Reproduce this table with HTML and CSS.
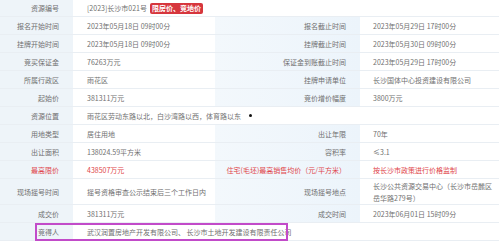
FILE: index.html
```html
<!DOCTYPE html>
<html lang="zh-CN">
<head>
<meta charset="utf-8">
<title>资源详情</title>
<link rel="stylesheet" href="styles.css">
</head>
<body>
<div class="sheet">
  <div class="lab">资源编号</div>
  <div class="val span3">[2023]长沙市021号<span class="badge">限房价、竞地价</span></div>

  <div class="lab">报名开始时间</div>
  <div class="val">2023年05月18日 09时00分</div>
  <div class="lab2">报名截止时间</div>
  <div class="val2">2023年05月29日 17时00分</div>

  <div class="lab">挂牌开始时间</div>
  <div class="val">2023年05月18日 09时00分</div>
  <div class="lab2">挂牌截止时间</div>
  <div class="val2">2023年05月30日 09时00分</div>

  <div class="lab">竞买保证金</div>
  <div class="val">76263万元</div>
  <div class="lab2">保证金到账截止时间</div>
  <div class="val2">2023年05月29日 17时00分</div>

  <div class="lab">所属行政区</div>
  <div class="val">雨花区</div>
  <div class="lab2">挂牌申请单位</div>
  <div class="val2">长沙国体中心投资建设有限公司</div>

  <div class="lab">起始价</div>
  <div class="val">381311万元</div>
  <div class="lab2">竞价增价幅度</div>
  <div class="val2">3800万元</div>

  <div class="lab">资源位置</div>
  <div class="val span3">雨花区劳动东路以北，白沙湾路以西，体育路以东<span class="dot"></span></div>

  <div class="lab">用地类型</div>
  <div class="val">居住用地</div>
  <div class="lab2">出让年限</div>
  <div class="val2">70年</div>

  <div class="lab">出让面积</div>
  <div class="val">138024.59平方米</div>
  <div class="lab2">容积率</div>
  <div class="val2">≤3.1</div>

  <div class="lab red">最高限价</div>
  <div class="val red">438507万元</div>
  <div class="lab2 red">住宅(毛坯)最高销售均价（元/平方米）</div>
  <div class="val2 red">按长沙市政策进行价格监制</div>

  <div class="lab">现场摇号时间</div>
  <div class="val">摇号资格审查公示结束后三个工作日内</div>
  <div class="lab2">现场摇号地点</div>
  <div class="val2 multi">长沙公共资源交易中心（长沙市岳麓区<br>岳华路279号）</div>

  <div class="lab">成交价</div>
  <div class="val">381311万元</div>
  <div class="lab2">成交时间</div>
  <div class="val2">2023年06月01日 15时09分</div>

  <div class="lab winner">竞得人<span class="mark"></span></div>
  <div class="val span3">武汉润置房地产开发有限公司、 长沙市土地开发建设有限责任公司</div>
</div>
</body>
</html>
```
FILE: styles.css
```css
html, body {
  margin: 0;
  padding: 0;
  background: #ffffff;
}
body {
  font-family: "Noto Sans CJK SC", "Noto Sans", "Liberation Sans", sans-serif;
  font-size: 7px;
  color: #707070;
  width: 499px;
  height: 244px;
  overflow: hidden;
}
.sheet {
  display: grid;
  grid-template-columns: 73px 142px 145px 1fr;
  grid-template-rows: 17px repeat(9, 18px) 26px 18px 18px;
}
.sheet > div {
  display: flex;
  align-items: center;
  border-bottom: 1px solid #e9eef3;
  box-sizing: border-box;
  white-space: nowrap;
}
.lab {
  justify-content: flex-end;
  padding-right: 14px;
  background: #eef4f9;
}
.val {
  padding-left: 14px;
  background: #ffffff;
}
.lab2 {
  justify-content: flex-end;
  padding-right: 14px;
  background: linear-gradient(to right, #f3f8fc, #ecf4fb);
}
.val2 {
  padding-left: 13px;
  background: #ffffff;
}
.span3 {
  grid-column: 2 / 5;
}
.red {
  color: #e0454a;
}
.multi {
  line-height: 12px;
}
.badge {
  margin-left: 3px;
  background: #d6363d;
  color: #ffffff;
  font-weight: bold;
  padding: 1px 2px;
  border-radius: 2px;
  line-height: 9px;
}
.dot {
  display: inline-block;
  width: 3px;
  height: 3px;
  border-radius: 50%;
  background: #111;
  margin-left: 8px;
}
.winner {
  position: relative;
}
.mark {
  position: absolute;
  left: 35px;
  top: 0;
  width: 253px;
  height: 18px;
  border: 2px solid #c24bc9;
  box-sizing: border-box;
}
```
